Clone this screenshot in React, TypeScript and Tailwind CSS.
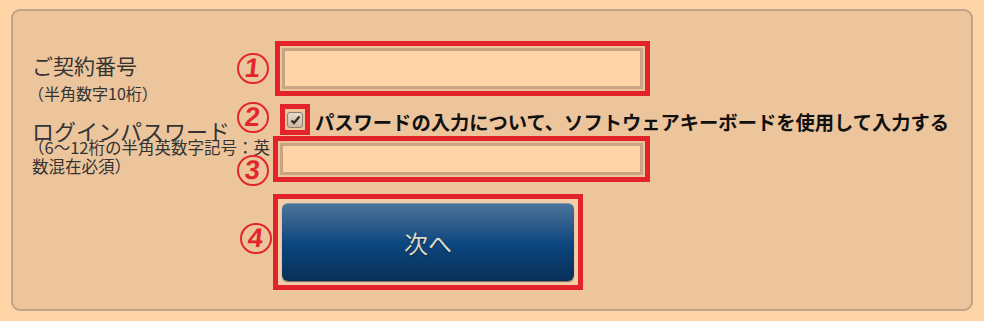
import { useState } from 'react';

const jp = { fontFamily: '"Noto Sans CJK JP", "Noto Sans", sans-serif' };

function Mark({ n, className = '' }: { n: string; className?: string }) {
  return (
    <div
      className={`flex h-[31px] w-[32px] shrink-0 items-center justify-center rounded-full border-2 border-[#e3262b] ${className}`}
    >
      <span
        className="-skew-x-6 text-[27px] leading-none font-black text-[#e3262b]"
        style={{ fontFamily: '"Liberation Sans", Arial, sans-serif' }}
      >
        {n}
      </span>
    </div>
  );
}

function Field({ width, height, left }: { width: string; height: string; left: string }) {
  return (
    <div className={`${width} ${height} ${left} border-[5px] border-[#e3232a] p-[2px]`}>
      <input
        type="text"
        className="h-full w-full border-[3px] border-[#c9a482] bg-[#ffd4a6] outline-none"
      />
    </div>
  );
}

export default function App() {
  const [soft, setSoft] = useState(true);

  return (
    <div className="h-[321px] w-[984px] overflow-hidden bg-[#ffd4a6] pt-[9px] pl-[11px]" style={jp}>
      <div className="flex h-[302px] w-[962px] rounded-[9px] border-2 border-[#bfa487] bg-[#ecc59d]">
        {/* labels */}
        <div className="w-[224px] shrink-0 pl-[19px] text-[#333]">
          <div className="mt-[44px] text-[21px] leading-[21px]">ご契約番号</div>
          <div className="mt-[10px] -ml-[4px] text-[16px] leading-[15px]">（半角数字10桁）</div>
          <div className="mt-[21px] text-[22px] leading-[17px]">ログインパスワード</div>
          <div className="-ml-[4px] whitespace-nowrap text-[16.5px] leading-[17px]">（6～12桁の半角英数字記号：英</div>
          <div className="mt-[2px] whitespace-nowrap text-[16.5px] leading-[17px]">数混在必須）</div>
        </div>

        {/* fields */}
        <div className="relative flex flex-col">
          <div className="mt-[30px] flex h-[55px] items-center">
            <Mark n="1" />
            <Field width="w-[375px]" height="h-[55px]" left="ml-[6px]" />
          </div>

          <div className="mt-[8px] flex h-[31px] items-center">
            <Mark n="2" className="-mt-[5px]" />
            <button
              type="button"
              onClick={() => setSoft(!soft)}
              className="ml-[11px] flex h-[31px] w-[30px] items-center justify-center border-[5px] border-[#e3232a]"
            >
              <span className="flex h-[16px] w-[16px] items-center justify-center rounded-[3px] border border-[#8e7f70] bg-gradient-to-b from-[#e6dccd] to-[#c9b9a4]">
                {soft && (
                  <svg width="11" height="10" viewBox="0 0 11 10">
                    <path d="M1.5 5.5 L4 8 L9.5 1.5" fill="none" stroke="#3b2f26" strokeWidth="2.4" />
                  </svg>
                )}
              </span>
            </button>
            <span className="mt-[6px] ml-[5px] whitespace-nowrap text-[19.3px] leading-none font-bold text-[#111]">
              パスワードの入力について、ソフトウェアキーボードを使用して入力する
            </span>
          </div>

          <div className="mt-[1px] flex h-[46px] items-start">
            <Mark n="3" className="mt-[19px]" />
            <Field width="w-[377px]" height="h-[46px]" left="ml-[4px]" />
          </div>

          <div className="mt-[12px] flex h-[96px] items-center">
            <Mark n="4" className="ml-[3px] -mt-[8px]" />
            <div className="ml-[1px] h-[96px] w-[310px] border-[5px] border-[#e3232a] bg-[#f3cfa8] p-[4px]">
              <button
                type="button"
                className="flex h-full w-full items-center justify-center rounded-[6px] border-t border-[#7d98b0] bg-gradient-to-b from-[#4b7398] via-[#0c4880] to-[#082f58] shadow-[0_1px_1px_rgba(0,0,0,0.5)]"
              >
                <span className="text-[24px] text-[#ddd8c9] [text-shadow:0_1px_1px_rgba(0,0,0,0.6)]">次へ</span>
              </button>
            </div>
          </div>
        </div>
      </div>
    </div>
  );
}
